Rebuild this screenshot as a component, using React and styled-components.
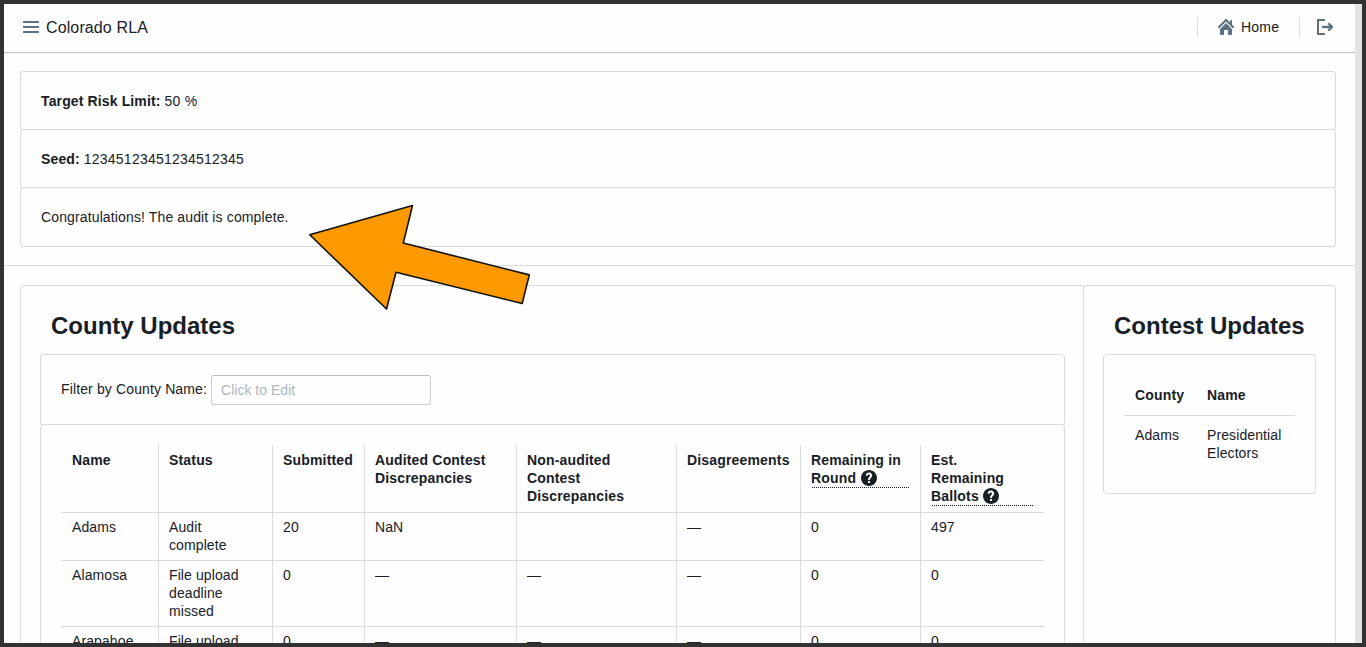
import React from "react";
import styled, { createGlobalStyle } from "styled-components";

const line = "#dadbdc";
const ink = "#182026";

const GlobalStyle = createGlobalStyle`
  *, *::before, *::after { box-sizing: border-box; }
  body {
    margin: 0;
    overflow: hidden;
    color: ${ink};
    font: 14px/18px "Liberation Sans", Arial, sans-serif;
    letter-spacing: 0.13px;
  }
`;

const Frame = styled.div`
  position: relative;
  display: flex;
  height: 647px;
  border: 4px solid #333232;
  background: #fefefe;
  overflow: hidden;
`;

const Page = styled.div`
  flex: 1;
  min-width: 0;
  height: 639px;
  overflow: hidden;
`;

const ScrollTrack = styled.div`
  width: 7px;
  flex: none;
  background: #e3e3e3;
`;

const Navbar = styled.header`
  display: flex;
  align-items: center;
  justify-content: space-between;
  height: 50px;
  padding: 0 22px 3px 19px;
  border-bottom: 1px solid #f4f4f4;
  box-shadow: inset 0 -1px 0 #c6c7c8;
`;

const NavGroup = styled.div`
  display: flex;
  align-items: center;
`;

const Brand = styled.span`
  margin-left: 7px;
  padding-top: 2px;
  font-size: 16px;
  letter-spacing: 0.12px;
`;

const NavDivider = styled.span`
  width: 1px;
  height: 20px;
  margin-left: ${(p) => p.$before || 0}px;
  margin-right: ${(p) => p.$after}px;
  background: ${line};
`;

const HomeLabel = styled.span`
  width: 38px;
  margin-left: 7px;
  letter-spacing: 0.2px;
`;

const Icon = styled.svg`
  display: block;
  flex: none;
  width: 16px;
  height: 16px;
  fill: #5c7080;
`;

const Summary = styled.section`
  padding: 18px 20px 19px 17px;
  border-bottom: 1px solid ${line};
`;

const Card = styled.div`
  position: relative;
  padding: 20px;
  border-radius: 3px;
  background: #fefefe;
  box-shadow: 0 0 0 1px ${line};
`;

const Digits = styled.span`
  letter-spacing: 0.225px;
`;

const Updates = styled.section`
  display: flex;
  padding: 20px 20px 0 17px;
`;

const Panel = styled(Card)`
  flex: ${(p) => (p.$width ? `0 0 ${p.$width}px` : "1")};
  height: 600px;
`;

const Heading = styled.h3`
  margin: 7px 10px 16px;
  font-size: 24px;
  line-height: 26px;
  letter-spacing: 0;
  white-space: nowrap;
`;

const FilterCard = styled(Card)`
  display: flex;
  align-items: flex-start;
  height: 70px;
`;

const FilterLabel = styled.label`
  width: 146px;
  margin: 5px 4px 0 0;
  white-space: nowrap;
`;

const FilterInput = styled.input`
  width: 220px;
  height: 30px;
  padding: 0 9px;
  border: 1px solid #cfd0d1;
  border-top-color: #bcbdbe;
  border-radius: 3px;
  background: #fefefe;
  font: inherit;
  letter-spacing: 0.02px;
  &::placeholder { color: #adb8c1; opacity: 1; }
`;

const Table = styled.table`
  width: 100%;
  table-layout: fixed;
  border-spacing: 0;

  th, td {
    padding: ${(p) => (p.$condensed ? 6 : 11)}px 11px;
    text-align: left;
    vertical-align: top;
  }
  th { letter-spacing: 0.17px; }
  td { letter-spacing: 0.1px; }
  tbody td { box-shadow: inset 0 1px 0 ${line}; }
`;

const BorderedTable = styled(Table)`
  th:not(:first-child) { box-shadow: inset 1px 0 0 ${line}; }
  tbody td:not(:first-child) { box-shadow: inset 1px 1px 0 ${line}; }
`;

const Hint = styled.div`
  padding-bottom: 1px;
  background: repeating-linear-gradient(90deg, transparent 0 1px, ${ink} 1px 2px) left bottom / 100% 1px no-repeat;
`;

const HelpIcon = styled(Icon)`
  display: inline-block;
  margin-left: ${(p) => p.$gap}px;
  vertical-align: -3px;
  fill: ${ink};
`;

const Arrow = styled.svg`
  position: absolute;
  left: 300px;
  top: 196px;
  width: 232px;
  height: 116px;
`;

const MenuIcon = () => (
  <Icon viewBox="0 0 16 16">
    <rect y="2" width="16" height="2" rx="0.4" />
    <rect y="7" width="16" height="2" rx="0.4" />
    <rect y="12" width="16" height="2" rx="0.4" />
  </Icon>
);

const HomeIcon = () => (
  <Icon viewBox="0 0 16 16">
    <path d="M2 10v5c0 .55.45 1 1 1h3v-5h4v5h3c.55 0 1-.45 1-1v-5L8 4l-6 6zm13.71-2.71L14 5.59V2c0-.55-.45-1-1-1s-1 .45-1 1v1.59L8.71.29C8.53.11 8.28 0 8 0s-.53.11-.71.29l-7 7a1.003 1.003 0 001.42 1.42L8 2.41l6.29 6.29c.18.19.43.3.71.3a1.003 1.003 0 00.71-1.71z" />
  </Icon>
);

const LogOutIcon = () => (
  <Icon viewBox="0 0 16 16">
    <path d="M7.6 14H2V2h5.6c.3 0 .4-.3.4-1s-.1-1-.4-1H.6C.2 0 0 .2 0 .6v14.8c0 .4.2.6.6.6h7c.3 0 .4-.3.4-1s-.1-1-.4-1z" />
    <path d="M15.71 7.29l-3-3a1.003 1.003 0 00-1.42 1.42L12.59 7H6c-.55 0-1 .45-1 1s.45 1 1 1h6.59l-1.3 1.29a1.003 1.003 0 001.42 1.42l3-3c.18-.18.29-.43.29-.71 0-.28-.11-.53-.29-.71z" strokeWidth="0.4" stroke="#5c7080" />
  </Icon>
);

const Help = ({ gap }) => (
  <HelpIcon $gap={gap} viewBox="0 0 16 16">
    <path d="M8 0C3.58 0 0 3.58 0 8s3.58 8 8 8 8-3.58 8-8-3.58-8-8-8zM7 13v-2h2v2H7zm3.93-6.48c-.14.32-.35.64-.62.97L9.25 8.83c-.12.15-.24.29-.28.42-.04.13-.09.3-.09.52V10H7.12V8.88s.05-.51.21-.71L8.4 6.73c.22-.26.35-.49.44-.68.09-.19.12-.38.12-.58 0-.3-.1-.55-.28-.75-.18-.19-.44-.28-.76-.28-.33 0-.59.1-.78.29-.19.19-.33.46-.4.81-.03.11-.1.15-.2.14l-1.7-.25c-.12-.01-.16-.08-.14-.19.12-.82.46-1.47 1.03-1.94.57-.48 1.32-.72 2.25-.72.47 0 .9.07 1.29.22s.72.34 1 .59c.28.25.49.55.65.89.15.35.22.72.22 1.12s-.07.75-.21 1.08z" />
  </HelpIcon>
);

const columns = [
  [97, "Name"],
  [114, "Status"],
  [92, "Submitted"],
  [152, "Audited Contest Discrepancies"],
  [160, "Non-audited Contest Discrepancies"],
  [124, "Disagreements"],
  [120, "Remaining in Round", 1],
  [124, "Est. Remaining Ballots", 0.3],
];

const counties = [
  ["Adams", "Audit complete", "20", "NaN", "", "—", "0", "497"],
  ["Alamosa", "File upload deadline missed", "0", "—", "—", "—", "0", "0"],
  ["Arapahoe", "File upload", "0", "—", "—", "—", "0", "0"],
];

export default function App() {
  return (
    <>
      <GlobalStyle />
      <Frame>
        <Page>
          <Navbar>
            <NavGroup>
              <MenuIcon />
              <Brand>Colorado RLA</Brand>
            </NavGroup>
            <NavGroup>
              <NavDivider $after={20} />
              <HomeIcon />
              <HomeLabel>Home</HomeLabel>
              <NavDivider $before={20} $after={17} />
              <LogOutIcon />
            </NavGroup>
          </Navbar>

          <Summary>
            <Card><strong>Target Risk Limit:</strong> <Digits>50 %</Digits></Card>
            <Card><strong>Seed:</strong> <Digits>12345123451234512345</Digits></Card>
            <Card>Congratulations! The audit is complete.</Card>
          </Summary>

          <Updates>
            <Panel>
              <Heading>County Updates</Heading>
              <FilterCard>
                <FilterLabel htmlFor="county">Filter by County Name:</FilterLabel>
                <FilterInput id="county" placeholder="Click to Edit" />
              </FilterCard>
              <Card>
                <BorderedTable $condensed>
                  <colgroup>
                    {columns.map(([width, name]) => <col key={name} width={width} />)}
                  </colgroup>
                  <thead>
                    <tr>
                      {columns.map(([, name, gap]) => (
                        <th key={name}>{gap ? <Hint>{name} <Help gap={gap} /></Hint> : name}</th>
                      ))}
                    </tr>
                  </thead>
                  <tbody>
                    {counties.map((row) => (
                      <tr key={row[0]}>
                        {row.map((cell, i) => <td key={i}>{cell}</td>)}
                      </tr>
                    ))}
                  </tbody>
                </BorderedTable>
              </Card>
            </Panel>
            <Panel $width={251}>
              <Heading>Contest Updates</Heading>
              <Card>
                <Table>
                  <colgroup><col width="72" /><col width="99" /></colgroup>
                  <thead><tr><th>County</th><th>Name</th></tr></thead>
                  <tbody><tr><td>Adams</td><td>Presidential Electors</td></tr></tbody>
                </Table>
              </Card>
            </Panel>
          </Updates>
        </Page>
        <ScrollTrack />
        <Arrow viewBox="0 0 232 116">
          <path
            d="M5.7 34.7 108.5 5.5 99.3 43 225.3 74.9 218.2 103.5 92 72.3 82.5 109Z"
            fill="#ff9900" stroke="#111" strokeWidth="1.6" strokeLinejoin="round"
          />
        </Arrow>
      </Frame>
    </>
  );
}
